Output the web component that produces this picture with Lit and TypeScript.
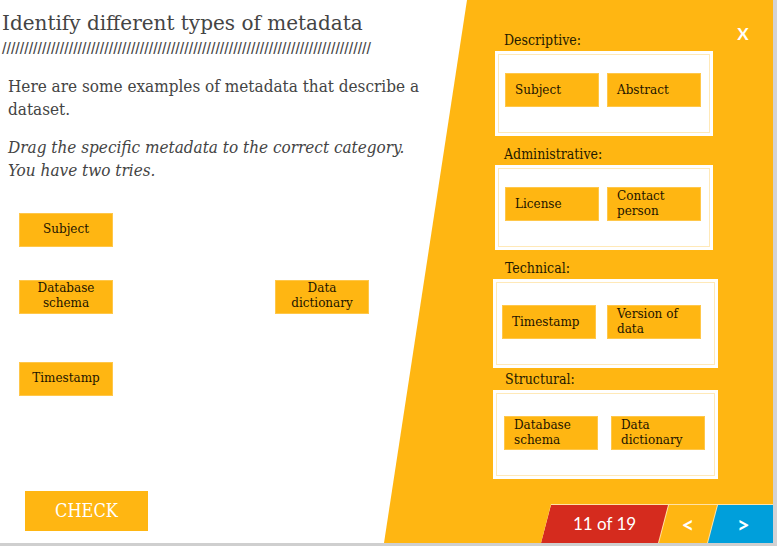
import { LitElement, html, css } from "lit";
import { customElement } from "lit/decorators.js";

interface Category {
  key: string;
  label: string;
  items: string[];
}

const categories: Category[] = [
  { key: "descriptive", label: "Descriptive:", items: ["Subject", "Abstract"] },
  { key: "administrative", label: "Administrative:", items: ["License", "Contact person"] },
  { key: "technical", label: "Technical:", items: ["Timestamp", "Version of data"] },
  { key: "structural", label: "Structural:", items: ["Database schema", "Data dictionary"] },
];

const SLASHES = "/".repeat(83);

@customElement("app-root")
export class AppRoot extends LitElement {
  static styles = css`
    :host {
      display: block;
      font-family: "DejaVu Serif Condensed", "DejaVu Serif", serif;
      color: #444;
    }
    * {
      box-sizing: border-box;
    }
    button {
      font: inherit;
      color: inherit;
      border: 0;
      padding: 0;
      margin: 0;
      background: none;
      cursor: pointer;
    }
    .stage {
      display: grid;
      grid-template-columns: minmax(0, 1fr) 83px 306px;
      min-height: 100vh;
      background: #fff;
      border-right: 4px solid #d3d2d4;
      border-bottom: 3px solid #cfcfcf;
    }
    .lesson {
      grid-column: 1 / 3;
      grid-row: 1;
      z-index: 1;
      display: flex;
      flex-direction: column;
      align-items: flex-start;
      padding: 10px 40px 12px 0;
      pointer-events: none;
    }
    .lesson button {
      pointer-events: auto;
    }
    h1 {
      margin: 0;
      padding-left: 2px;
      font-family: "DejaVu Serif", serif;
      font-size: 20px;
      font-weight: 400;
      line-height: 26px;
      white-space: nowrap;
    }
    .rule {
      padding: 3px 0 0 2px;
      font-family: "Liberation Sans", sans-serif;
      font-size: 16px;
      line-height: 20px;
      white-space: nowrap;
    }
    .copy {
      padding: 16px 0 0 8px;
      font-size: 17px;
      line-height: 23px;
    }
    .copy p {
      margin: 0 0 15px;
    }
    .sources {
      display: grid;
      grid-template-columns: 94px 94px;
      column-gap: 162px;
      row-gap: 33px;
      padding: 16px 0 0 19px;
    }
    .sources .first,
    .sources .last {
      grid-column: 1;
    }
    .sources .last {
      margin-top: 15px;
    }
    .chip {
      display: flex;
      align-items: center;
      width: 94px;
      height: 34px;
      padding: 0 4px 0 9px;
      border: 1px solid #ffc74a;
      background: #ffb612;
      color: #1c1400;
      font-family: "DejaVu Serif", serif;
      font-size: 12px;
      line-height: 15px;
      text-align: left;
    }
    .sources .chip {
      justify-content: center;
      padding: 0 10px 2px;
      text-align: center;
    }
    .check {
      width: 123px;
      height: 40px;
      margin: auto 0 0 25px;
      padding-bottom: 2px;
      background: #ffb612;
      color: #fff;
      font-size: 18px;
    }
    .panel {
      grid-column: 2 / 4;
      grid-row: 1;
      position: relative;
      display: flex;
      flex-direction: column;
      padding-top: 33px;
      background: #ffb612;
      clip-path: polygon(83px 0, 100% 0, 100% 100%, 0 100%);
    }
    .close {
      position: absolute;
      top: 22px;
      right: 18px;
      width: 24px;
      height: 24px;
      color: #fff;
      font-family: Lato, sans-serif;
      font-size: 17px;
      font-weight: 700;
      line-height: 24px;
    }
    .group {
      width: 218px;
      margin: 0 0 11px 111px;
    }
    .group h2 {
      margin: 0 0 3px;
      padding-left: 9px;
      color: #241a00;
      font-size: 14px;
      font-weight: 400;
      line-height: 15px;
    }
    .drop {
      display: flex;
      gap: 8px;
      padding: 19px 7px 26px;
      border: 3px solid #fff;
      outline: 1px solid #ffe9b8;
      outline-offset: -4px;
      background: #fff;
    }
    .technical,
    .structural {
      width: 225px;
      margin-left: 109px;
    }
    .technical {
      margin-bottom: 4px;
    }
    .technical h2,
    .structural h2 {
      padding-left: 12px;
    }
    .technical .drop,
    .structural .drop {
      padding-top: 23px;
    }
    .technical .drop {
      gap: 11px;
      padding-left: 6px;
    }
    .structural .drop {
      gap: 13px;
      padding-left: 8px;
    }
    .pager {
      display: flex;
      align-self: flex-end;
      width: 232px;
      height: 39px;
      margin-top: auto;
      padding-top: 1px;
      background: #ffe2a6;
      color: #fff;
      font-family: Lato, sans-serif;
      font-size: 17px;
      clip-path: polygon(10px 0, 100% 0, 100% 100%, 0 100%);
    }
    .pager > * {
      display: flex;
      align-items: center;
      justify-content: center;
      clip-path: polygon(10px 0, 100% 0, calc(100% - 10px) 100%, 0 100%);
    }
    .count {
      width: 127px;
      padding-bottom: 2px;
      background: #d52b1e;
    }
    .step {
      width: 58px;
      margin-left: -9px;
      background: #ffb612;
      font-size: 22px;
      font-weight: 700;
    }
    .next {
      flex: 1;
      padding-left: 6px;
      background: #009fdb;
      clip-path: polygon(10px 0, 100% 0, 100% 100%, 0 100%);
    }
  `;

  render() {
    return html`
      <div class="stage">
        <main class="lesson">
          <h1>Identify different types of metadata</h1>
          <div class="rule" aria-hidden="true">${SLASHES}</div>
          <div class="copy">
            <p>Here are some examples of metadata that describe a<br />dataset.</p>
            <p><em>Drag the specific metadata to the correct category.<br />You have two tries.</em></p>
          </div>
          <div class="sources">
            <button class="chip first" draggable="true">Subject</button>
            <button class="chip first" draggable="true">Database schema</button>
            <button class="chip" draggable="true">Data dictionary</button>
            <button class="chip last" draggable="true">Timestamp</button>
          </div>
          <button class="check">CHECK</button>
        </main>
        <aside class="panel">
          <button class="close" aria-label="Close">X</button>
          ${categories.map(
            (c) => html`
              <section class="group ${c.key}">
                <h2>${c.label}</h2>
                <div class="drop">
                  ${c.items.map((item) => html`<button class="chip" draggable="true">${item}</button>`)}
                </div>
              </section>
            `
          )}
          <nav class="pager" aria-label="Pages">
            <span class="count">11 of 19</span>
            <button class="step" aria-label="Previous">&lt;</button>
            <button class="step next" aria-label="Next">&gt;</button>
          </nav>
        </aside>
      </div>
    `;
  }
}
